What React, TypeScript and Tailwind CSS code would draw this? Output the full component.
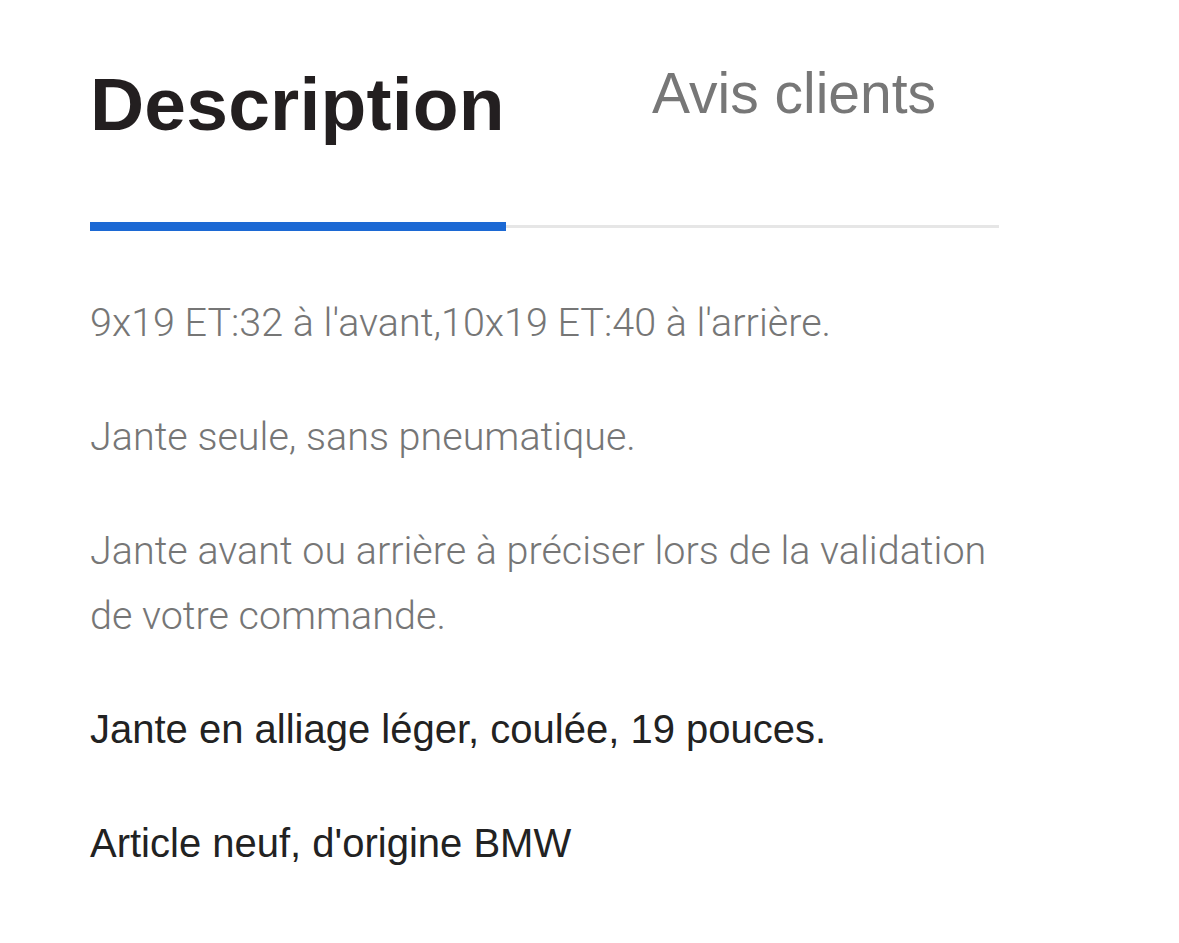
import { useState } from "react";

const tabs = [
  { id: "description", label: "Description" },
  { id: "avis", label: "Avis clients" },
];

const notes = [
  "9x19 ET:32 à l'avant,10x19 ET:40 à l'arrière.",
  "Jante seule, sans pneumatique.",
  "Jante avant ou arrière à préciser lors de la validation de votre commande.",
];

const details = [
  "Jante en alliage léger, coulée, 19 pouces.",
  "Article neuf, d'origine BMW",
];

export default function App() {
  const [active, setActive] = useState("description");

  return (
    <div className="min-h-screen bg-white pl-[90px] pt-[61px] font-['Liberation_Sans',Arial,sans-serif]">
      <div className="w-[909px]">
        {/* tabs */}
        <div className="flex items-start">
          <button
            onClick={() => setActive(tabs[0].id)}
            className={`w-[416px] text-left text-[75px] leading-[1.15] font-bold tracking-[0.2px] ${
              active === "description" ? "text-[#231f20]" : "text-[#777]"
            }`}
          >
            {tabs[0].label}
          </button>
          <button
            onClick={() => setActive(tabs[1].id)}
            className={`ml-[146px] text-left text-[57px] leading-[1.15] ${
              active === "avis" ? "text-[#231f20]" : "text-[#777]"
            }`}
          >
            {tabs[1].label}
          </button>
        </div>

        {/* indicator */}
        <div className="mt-[75px] flex items-center">
          <div className="h-[9px] w-[416px] bg-[#1c69d4]"></div>
          <div className="h-[3px] flex-1 bg-[#e6e6e6]"></div>
        </div>
      </div>

      {/* content */}
      <div className="mt-[59px] w-[909px]">
        {notes.map((text, i) => (
          <p
            key={i}
            className="mb-[49px] font-['Roboto',sans-serif] text-[39.5px] leading-[65px] font-light text-[#767676]"
          >
            {text}
          </p>
        ))}
        {details.map((text, i) => (
          <p
            key={i}
            className="mb-[49px] text-[40px] leading-[65px] text-[#222]"
          >
            {text}
          </p>
        ))}
      </div>
    </div>
  );
}
